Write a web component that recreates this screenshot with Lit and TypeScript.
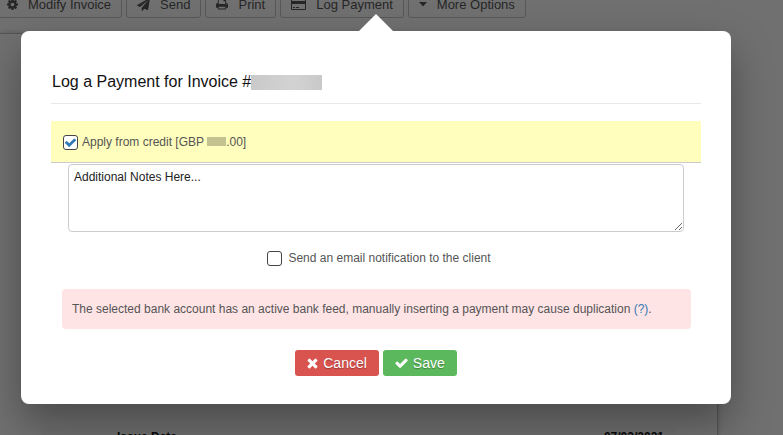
import { LitElement, html, svg, css } from "lit";
import { customElement, property } from "lit/decorators.js";

const icons: Record<string, { box: string; d: string }> = {
  cog: {
    box: "128 128 1536 1536",
    d: "M1152 896q0-106-75-181t-181-75-181 75-75 181 75 181 181 75 181-75 75-181zm512-109v222q0 12-8 23t-20 13l-185 28q-19 54-39 91 35 50 107 138 10 12 10 25t-9 23q-27 37-99 108t-94 71q-12 0-26-9l-138-108q-44 23-91 38-16 136-29 186-7 28-36 28h-222q-14 0-24.5-8.5t-11.5-21.5l-28-184q-49-16-90-37l-141 107q-10 9-25 9-14 0-25-11-126-114-165-168-7-10-7-23 0-12 8-23 15-21 51-66.500t54-70.500q-27-50-41-99l-183-27q-13-2-21-12.500t-8-23.500v-222q0-12 8-23t19-13l186-28q14-46 39-92-40-57-107-138-10-12-10-24 0-10 9-23 26-36 98.500-107.500t94.500-71.500q13 0 26 10l138 107q44-23 91-38 16-136 29-186 7-28 36-28h222q14 0 24.500 8.500t11.500 21.500l28 184q49 16 90 37l142-107q9-9 24-9 13 0 25 10 129 119 165 170 7 8 7 22 0 12-8 23-15 21-51 66.500t-54 70.500q26 50 41 98l183 28q13 2 21 12.500t8 23.500z",
  },
  plane: {
    box: "0 0 1792 1792",
    d: "M1764 11q33 24 27 64l-256 1536q-5 29-32 45-14 8-31 8-11 0-24-5l-453-185-242 295q-18 23-49 23-13 0-22-4-19-7-30.5-23.5t-11.5-36.5v-349l864-1059-1069 925-395-162q-37-14-40-55-2-40 32-59l1664-960q15-9 32-9 20 0 36 11z",
  },
  print: {
    box: "64 128 1664 1536",
    d: "M448 1536h896v-256h-896v256zm0-640h896v-384h-160q-40 0-68-28t-28-68v-160h-640v640zm1152 64q0-26-19-45t-45-19-45 19-19 45 19 45 45 19 45-19 19-45zm128 0v416q0 13-9.5 22.5t-22.5 9.5h-224v160q0 40-28 68t-68 28h-960q-40 0-68-28t-28-68v-160h-224q-13 0-22.5-9.5t-9.5-22.5v-416q0-79 56.5-135.5t135.5-56.5h64v-544q0-40 28-68t68-28h672q40 0 88 20t76 48l152 152q28 28 48 76t20 88v256h64q79 0 135.5 56.5t56.5 135.5z",
  },
  card: {
    box: "0 128 1920 1536",
    d: "M1760 128q66 0 113 47t47 113v1216q0 66-47 113t-113 47h-1600q-66 0-113-47t-47-113v-1216q0-66 47-113t113-47h1600zm-1600 128q-13 0-22.5 9.5t-9.5 22.5v224h1664v-224q0-13-9.5-22.5t-22.5-9.5h-1600zm1600 1280q13 0 22.5-9.5t9.5-22.5v-608h-1664v608q0 13 9.5 22.5t22.5 9.5h1600zm-1504-128v-128h256v128h-256zm384 0v-128h384v128h-384z",
  },
  caret: { box: "0 0 8 8", d: "M0 2h8l-4 4.500z" },
  times: {
    box: "302 302 1188 1188",
    d: "M1490 1322q0 40-28 68l-136 136q-28 28-68 28t-68-28l-294-294-294 294q-28 28-68 28t-68-28l-136-136q-28-28-28-68t28-68l294-294-294-294q-28-28-28-68t28-68l136-136q28-28 68-28t68 28l294 294 294-294q28-28 68-28t68 28l136 136q28 28 28 68t-28 68l-294 294 294 294q28 28 28 68z",
  },
  check: {
    box: "121 270 1550 1252",
    d: "M1671 566q0 40-28 68l-724 724-136 136q-28 28-68 28t-68-28l-136-136-362-362q-28-28-28-68t28-68l136-136q28-28 68-28t68 28l294 295 656-657q28-28 68-28t68 28l136 136q28 28 28 68z",
  },
};

const icon = (name: string) => svg`
  <svg class="icon ${name}" viewBox=${icons[name].box} aria-hidden="true">
    <path d=${icons[name].d}></path>
  </svg>`;

const iconStyles = css`
  .icon {
    display: block;
    flex: none;
    width: 13px;
    height: 13px;
    fill: currentColor;
    overflow: visible;
  }
`;

@customElement("tick-box")
class TickBox extends LitElement {
  @property({ type: Boolean }) checked = false;

  static styles = [
    iconStyles,
    css`
      :host {
        display: block;
      }
      .row {
        display: flex;
        align-items: center;
        gap: var(--tick-gap, 4px);
      }
      .box {
        display: grid;
        place-items: center;
      }
      .box > * {
        grid-area: 1 / 1;
      }
      .input {
        appearance: none;
        box-sizing: border-box;
        width: 15px;
        height: 15px;
        margin: 0;
        border: 1px solid #444;
        border-radius: 3px;
        background: #fff;
      }
      .check {
        width: 11px;
        height: 9px;
        color: #337ab7;
        pointer-events: none;
      }
      .input:not(:checked) + .check {
        visibility: hidden;
      }
    `,
  ];

  render() {
    return html`
      <label class="row">
        <span class="box">
          <input class="input" type="checkbox" .checked=${this.checked} />
          ${icon("check")}
        </span>
        <span><slot></slot></span>
      </label>
    `;
  }
}

@customElement("invoice-page")
class InvoicePage extends LitElement {
  static styles = [
    iconStyles,
    css`
      :host {
        display: block;
      }
      .toolbar {
        display: flex;
        gap: 4px;
        margin: -10px 0 15px -4px;
      }
      .tool {
        display: flex;
        align-items: center;
        gap: 10px;
        box-sizing: border-box;
        height: 28px;
        padding: 0 10px;
        border: 1px solid #c4c4c4;
        border-radius: 3px;
        background: transparent;
        color: #555;
        font: 13px "Liberation Sans", Arial, sans-serif;
        white-space: nowrap;
      }
      .cog {
        width: 11px;
        height: 11px;
      }
      .print {
        width: 12px;
        height: 12px;
      }
      .card {
        width: 15px;
        height: 12px;
      }
      .caret {
        width: 8px;
        height: 8px;
      }
      .sheet {
        margin-right: 65px;
        padding: 393px 41px 40px;
        border: 1px solid #bbb;
        border-left: 0;
        box-shadow: 0 0 6px rgba(0, 0, 0, 0.2);
      }
      .detail {
        display: flex;
        justify-content: space-between;
        padding: 3px 12px 3px 76px;
        background: #f4f4f4;
        color: #111;
        font-size: 12px;
        font-weight: bold;
        line-height: 14px;
      }
    `,
  ];

  tools = [
    ["cog", "Modify Invoice"],
    ["plane", "Send"],
    ["print", "Print"],
    ["card", "Log Payment"],
    ["caret", "More Options"],
  ];

  render() {
    return html`
      <nav class="toolbar">
        ${this.tools.map(
          ([name, label]) =>
            html`<button class="tool" type="button">${icon(name)}<span>${label}</span></button>`
        )}
      </nav>
      <section class="sheet">
        <div class="detail"><span>Issue Date</span><span>07/02/2021</span></div>
      </section>
    `;
  }
}

@customElement("payment-dialog")
class PaymentDialog extends LitElement {
  static styles = [
    iconStyles,
    css`
      :host {
        display: block;
      }
      .dialog {
        position: relative;
        box-sizing: border-box;
        padding: 41px 30px 28px;
        border-radius: 8px;
        background: #fff;
        box-shadow: 0 19px 40px rgba(0, 0, 0, 0.34);
        color: #555;
        font-size: 12px;
        line-height: 16px;
      }
      .pointer {
        position: absolute;
        left: 50%;
        bottom: 100%;
        width: 34px;
        height: 17px;
        margin-left: -17px;
        background: #fff;
        clip-path: polygon(50% 0, 100% 100%, 0 100%);
      }
      .title {
        display: flex;
        align-items: center;
        margin: 0;
        padding: 0 1px 11px;
        border-bottom: 1px solid #e9e9e9;
        color: #111;
        font-size: 16px;
        font-weight: normal;
        line-height: 20px;
      }
      .number {
        width: 71px;
        height: 15px;
        background: linear-gradient(100deg, #c9c9c9, #d3d3d3 60%, #c8c8c8);
      }
      .credit {
        margin-top: 17px;
        padding: 13px 12px 12px;
        border-bottom: 1px solid #ccc;
        background: #fffebc;
      }
      .amount {
        display: inline-block;
        width: 19px;
        height: 9px;
        background: #c5c292;
      }
      .notes {
        display: block;
        box-sizing: border-box;
        width: calc(100% - 34px);
        height: 68px;
        margin: 1px 17px 0;
        padding: 4px 5px;
        border: 1px solid #ccc;
        border-radius: 4px;
        background: #fff;
        color: #222;
        font: 12px/16px "Liberation Sans", Arial, sans-serif;
      }
      .notify {
        --tick-gap: 6px;
        display: flex;
        justify-content: center;
        margin: 18px 0 23px 6px;
      }
      .warning {
        margin: 0 10px 21px 11px;
        padding: 12px 10px;
        border-radius: 4px;
        background: #ffe4e5;
      }
      .help {
        color: #337ab7;
        text-decoration: none;
      }
      .actions {
        display: flex;
        justify-content: center;
        gap: 4px;
      }
      .action {
        display: flex;
        align-items: center;
        gap: 5px;
        height: 26px;
        padding: 0 12px;
        border: 0;
        border-radius: 3px;
        color: #fff;
        font: 14px "Liberation Sans", Arial, sans-serif;
        text-shadow: 0 1px 1px rgba(0, 0, 0, 0.3);
      }
      .cancel {
        background: #d9534f;
      }
      .save {
        background: #5cb85c;
      }
      .times {
        width: 11px;
        height: 10px;
      }
      .check {
        width: 13px;
        height: 10px;
      }
    `,
  ];

  render() {
    return html`
      <form class="dialog" role="dialog" aria-labelledby="title">
        <span class="pointer"></span>
        <h1 class="title" id="title">Log a Payment for Invoice #<span class="number"></span></h1>
        <div class="credit">
          <tick-box checked>Apply from credit [GBP <span class="amount"></span>.00]</tick-box>
        </div>
        <textarea class="notes" aria-label="Additional notes" .value=${"Additional Notes Here..."}></textarea>
        <div class="notify">
          <tick-box>Send an email notification to the client</tick-box>
        </div>
        <div class="warning">
          The selected bank account has an active bank feed, manually inserting a payment may cause
          duplication <a class="help" href="#help">(?)</a>.
        </div>
        <div class="actions">
          <button class="action cancel" type="button">${icon("times")}<span>Cancel</span></button>
          <button class="action save" type="button">${icon("check")}<span>Save</span></button>
        </div>
      </form>
    `;
  }
}

@customElement("app-root")
class AppRoot extends LitElement {
  static styles = css`
    :host {
      display: block;
      position: relative;
      height: 100vh;
      overflow: hidden;
      background: #f9f9f9;
      font-family: "Liberation Sans", Arial, sans-serif;
    }
    .overlay {
      position: absolute;
      inset: 0;
      padding: 31px 52px 31px 21px;
      background: rgba(0, 0, 0, 0.55);
    }
  `;

  render() {
    return html`
      <invoice-page></invoice-page>
      <div class="overlay"><payment-dialog></payment-dialog></div>
    `;
  }
}
